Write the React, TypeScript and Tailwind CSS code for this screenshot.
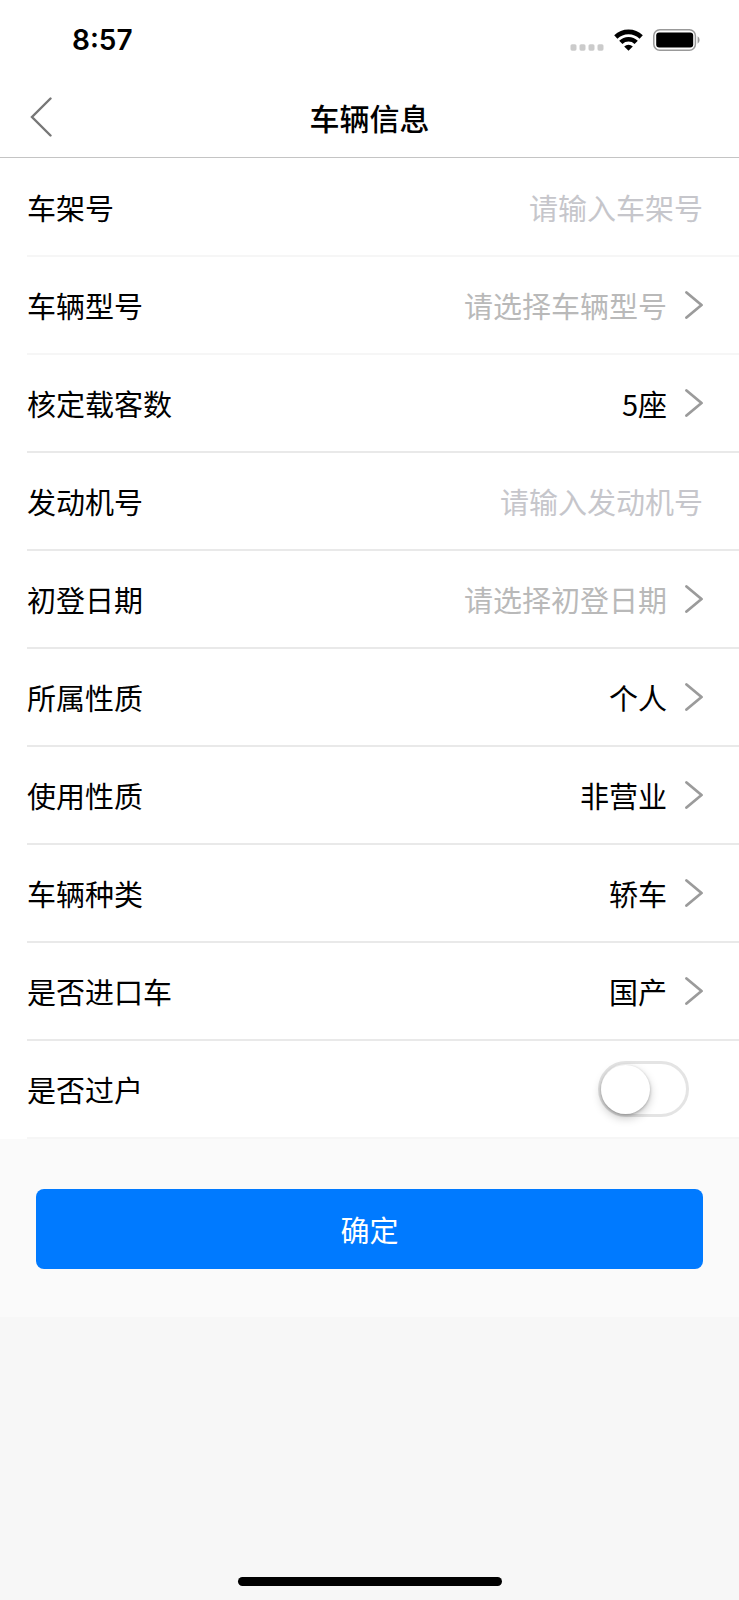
import type { FormEvent } from 'react';

type Row = {
  id: string;
  label: string;
  kind: 'input' | 'select' | 'date' | 'switch';
  placeholder?: string;
  options?: string[];
  faintLine?: boolean;
};

const rows: Row[] = [
  { id: 'vin', label: '车架号', kind: 'input', placeholder: '请输入车架号', faintLine: true },
  { id: 'model', label: '车辆型号', kind: 'select', placeholder: '请选择车辆型号', faintLine: true },
  { id: 'seats', label: '核定载客数', kind: 'select', options: ['5座'] },
  { id: 'engine', label: '发动机号', kind: 'input', placeholder: '请输入发动机号' },
  { id: 'registered', label: '初登日期', kind: 'date', placeholder: '请选择初登日期' },
  { id: 'owner', label: '所属性质', kind: 'select', options: ['个人'] },
  { id: 'usage', label: '使用性质', kind: 'select', options: ['非营业'] },
  { id: 'category', label: '车辆种类', kind: 'select', options: ['轿车'] },
  { id: 'imported', label: '是否进口车', kind: 'select', options: ['国产'] },
  { id: 'transferred', label: '是否过户', kind: 'switch', faintLine: true },
];

function StatusBar() {
  return (
    <div className="flex h-20 items-center justify-between pr-[38px] pl-[72px]">
      <span className="font-['Inter',sans-serif] text-[28px] leading-8 font-semibold">8:57</span>
      <div className="flex items-center gap-2.5">
        <svg className="h-[22px] w-[34px]" viewBox="0 0 34 22" fill="#cbcbcb" aria-hidden="true">
          <rect x="0.5" y="15.2" width="6" height="6.5" rx="1.6" />
          <rect x="9.5" y="15.2" width="6" height="6.5" rx="1.6" />
          <rect x="18.5" y="15.2" width="6" height="6.5" rx="1.6" />
          <rect x="27.5" y="15.2" width="6" height="6.5" rx="1.6" />
        </svg>
        <svg className="h-[22px] w-[29px]" viewBox="0 0 29 22" aria-hidden="true">
          <g fill="none" stroke="#000" strokeWidth="4.6">
            <path d="M1.8 8 A18.2 18.2 0 0 1 27.2 8" />
            <path d="M6.8 13.4 A11 11 0 0 1 22.2 13.4" />
          </g>
          <path d="M14.5 21.8 L10.2 17.4 A6.2 6.2 0 0 1 18.8 17.4 Z" fill="#000" />
        </svg>
        <svg className="h-[22px] w-12" viewBox="0 0 48 22" aria-hidden="true">
          <rect x="0.8" y="0.8" width="41.6" height="20.4" rx="6" fill="#fff" stroke="#999" strokeWidth="1.5" />
          <rect x="3.2" y="3.6" width="37" height="14.8" rx="3" fill="#000" />
          <path d="M44.6 7.3 A4.4 4.4 0 0 1 44.6 14.7 Z" fill="#999" />
        </svg>
      </div>
    </div>
  );
}

function Chevron() {
  return (
    <svg className="h-7 w-[18px] shrink-0" viewBox="0 0 18 28" fill="none" aria-hidden="true">
      <path d="M1.5 1.5 L16.5 14 L1.5 26.5" stroke="#9b9b9b" strokeWidth="2.8" strokeLinecap="round" strokeLinejoin="round" />
    </svg>
  );
}

function Control({ row }: { row: Row }) {
  if (row.kind === 'input') {
    return (
      <input
        id={row.id}
        type="text"
        placeholder={row.placeholder}
        className="h-full min-w-0 flex-1 bg-transparent text-right outline-none placeholder:text-[#c6c6cb]"
      />
    );
  }

  if (row.kind === 'switch') {
    return (
      <input
        id={row.id}
        type="checkbox"
        role="switch"
        className="mr-3.5 flex h-14 w-[91px] appearance-none items-center rounded-full border-3 border-[#e4e4e4] bg-white before:h-[49px] before:w-[49px] before:rounded-full before:bg-white before:shadow-[0_4px_10px_rgba(0,0,0,0.22),0_1px_3px_rgba(0,0,0,0.25)] checked:justify-end checked:border-[#4cd964] checked:bg-[#4cd964]"
      />
    );
  }

  if (row.kind === 'date') {
    return (
      <button
        id={row.id}
        type="button"
        aria-haspopup="dialog"
        className="flex h-full flex-1 items-center justify-end gap-[18px] text-[#b9b9b9]"
      >
        {row.placeholder}
        <Chevron />
      </button>
    );
  }

  return (
    <div className="flex h-full flex-1 items-center gap-[18px]">
      <select
        id={row.id}
        defaultValue={row.options ? row.options[0] : ''}
        className={`h-full min-w-0 flex-1 appearance-none bg-transparent text-right [text-align-last:right] outline-none ${
          row.options ? 'text-black' : 'text-[#b9b9b9]'
        }`}
      >
        {row.placeholder && (
          <option value="" disabled>
            {row.placeholder}
          </option>
        )}
        {row.options?.map((option) => (
          <option key={option}>{option}</option>
        ))}
      </select>
      <Chevron />
    </div>
  );
}

export default function App() {
  const handleSubmit = (e: FormEvent) => {
    e.preventDefault();
  };

  return (
    <div className="flex min-h-screen flex-col bg-[#f7f7f7] font-['Noto_Sans_CJK_SC',sans-serif] text-[29px] leading-10 text-black">
      <header className="border-b border-[#c4c4c4] bg-white">
        <StatusBar />
        <nav className="grid h-[77px] grid-cols-[1fr_auto_1fr] items-center px-[30px] pb-1">
          <button type="button" aria-label="返回" className="justify-self-start">
            <svg className="h-10 w-[22px]" viewBox="0 0 22 40" fill="none" aria-hidden="true">
              <path d="M20.5 1.5 L2 20 L20.5 38.5" stroke="#777" strokeWidth="2.4" strokeLinecap="round" />
            </svg>
          </button>
          <h1 className="text-[30px] font-medium">车辆信息</h1>
        </nav>
      </header>

      <form className="bg-[#fafafa] pb-12" onSubmit={handleSubmit}>
        <div className="bg-white pt-px pl-[27px]">
          {rows.map((row) => (
            <div
              key={row.id}
              className={`flex h-[98px] items-center border-b-2 pr-9 ${
                row.faintLine ? 'border-[#f6f6f6]' : 'border-[#e9e9e9]'
              }`}
            >
              <label htmlFor={row.id} className="shrink-0">
                {row.label}
              </label>
              <div className="flex h-full flex-1 items-center justify-end">
                <Control row={row} />
              </div>
            </div>
          ))}
        </div>

        <div className="px-9 pt-[50px]">
          <button type="submit" className="h-20 w-full rounded-lg bg-[#007aff] text-white">
            确定
          </button>
        </div>
      </form>

      <div className="mx-auto mt-auto mb-3.5 h-[9px] w-[264px] rounded-full bg-black" />
    </div>
  );
}
